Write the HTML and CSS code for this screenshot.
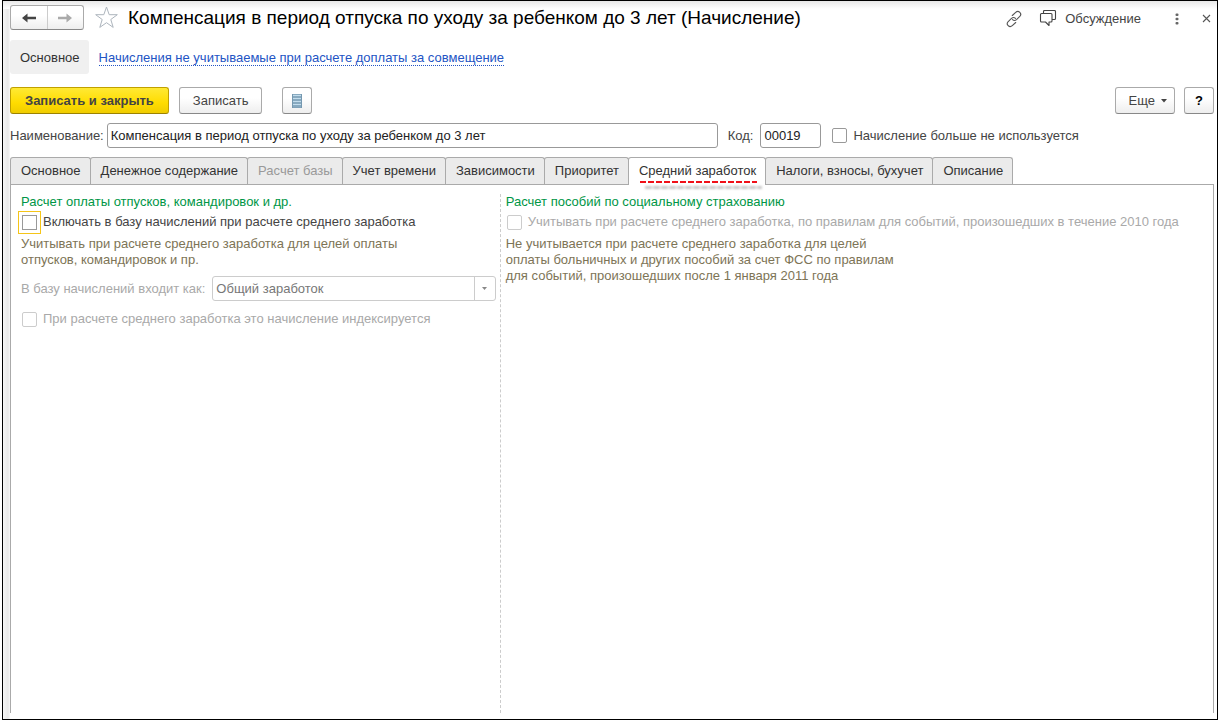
FILE: index.html
```html
<!DOCTYPE html>
<html lang="ru">
<head>
<meta charset="utf-8">
<title>Компенсация в период отпуска по уходу за ребенком до 3 лет (Начисление)</title>
<link rel="stylesheet" href="styles.css">
</head>
<body>
<main class="window">
  <header class="titlebar">
    <div class="history">
      <button class="history-btn" type="button" aria-label="Назад">
        <svg width="16" height="12" viewBox="0 0 16 12"><path d="M1 6L6.500 1.500V4.800H15V7.200H6.500V10.500Z" fill="#444"/></svg>
      </button>
      <button class="history-btn" type="button" aria-label="Вперед">
        <svg width="16" height="12" viewBox="0 0 16 12"><path d="M15 6L9.500 1.500V4.800H1V7.200H9.500V10.500Z" fill="#aaa"/></svg>
      </button>
    </div>
    <button class="icon-btn star" type="button" aria-label="Избранное">
      <svg width="24" height="24" viewBox="0 0 24 24"><path d="M12.500 1L15.200 8.700H23.300L16.800 13.500L19.200 21.400L12.500 16.700L5.800 21.400L8.200 13.500L1.700 8.700H9.800Z" fill="#fff" stroke="#adb5bd"/></svg>
    </button>
    <h1 class="title">Компенсация в период отпуска по уходу за ребенком до 3 лет (Начисление)</h1>
    <div class="title-actions">
      <button class="icon-btn" type="button" aria-label="Ссылка">
        <svg width="18" height="18" viewBox="0 0 18 18" fill="none" stroke="#555" stroke-width="1.100" stroke-linecap="round"><path d="M7.300 5.500L10.700 2.300C12 1.100 13.700 1.200 14.800 2.300C16 3.500 16 5.200 14.800 6.400L11.500 9.600C10.300 10.700 8.700 10.700 7.500 9.600"/><path d="M10.700 12.500L7.300 15.700C6 16.900 4.300 16.800 3.200 15.700C2 14.500 2 12.800 3.200 11.600L6.500 8.400C7.700 7.300 9.300 7.300 10.500 8.400"/></svg>
      </button>
      <button class="icon-btn discuss" type="button">
        <svg width="18" height="18" viewBox="0 0 18 18" fill="none" stroke="#444" stroke-width="1.100" stroke-linejoin="round"><path d="M2.500 3.500H12C12.800 3.500 13 3.800 13 4.500V11C13 11.700 12.700 12 12 12H10V15.500L6.500 12H2.500C1.800 12 1.500 11.700 1.500 11V4.500C1.500 3.800 1.800 3.500 2.500 3.500Z"/><path d="M4.500 3.500V1.500C4.500 .8 4.800 .5 5.500 .5H15.500C16.200 .5 16.500 .8 16.500 1.500V8.500C16.500 9.200 16.200 9.500 15.500 9.500H13"/></svg>
        <span>Обсуждение</span>
      </button>
      <button class="icon-btn dots" type="button" aria-label="Меню">
        <svg width="4" height="12" viewBox="0 0 4 12" fill="#666"><rect x=".5" y=".5" width="3" height="2.600" rx="1"/><rect x=".5" y="4.700" width="3" height="2.600" rx="1"/><rect x=".5" y="8.900" width="3" height="2.600" rx="1"/></svg>
      </button>
      <button class="icon-btn close" type="button" aria-label="Закрыть">
        <svg width="9" height="9" viewBox="0 0 9 9"><path d="M1 1L8 8M8 1L1 8" stroke="#555" stroke-width="1.100"/></svg>
      </button>
    </div>
  </header>

  <nav class="sections">
    <span class="section-current">Основное</span>
    <a class="section-link" href="#supplement">Начисления не учитываемые при расчете доплаты за совмещение</a>
  </nav>

  <div class="toolbar">
    <button class="btn btn-primary" type="button">Записать и закрыть</button>
    <button class="btn btn-save" type="button">Записать</button>
    <button class="btn btn-square btn-list" type="button" aria-label="Список">
      <svg width="10" height="14" viewBox="0 0 10 14"><rect width="10" height="14" fill="#7598b0"/><path d="M1 1.500H9M1 4.500H9M1 7.500H9M1 10.500H9" stroke="#c3dded" stroke-width="1.600"/><path d="M1 12.900H9" stroke="#94b5c9"/></svg>
    </button>
    <button class="btn btn-more" type="button">Еще <svg width="6" height="4" viewBox="0 0 6 4"><path d="M0 0H6L3 3.500Z" fill="#444"/></svg></button>
    <button class="btn btn-square btn-help" type="button">?</button>
  </div>

  <div class="fields">
    <label for="name">Наименование:</label>
    <input class="text-input name-input" id="name" type="text" value="Компенсация в период отпуска по уходу за ребенком до 3 лет">
    <label for="code">Код:</label>
    <input class="text-input code-input" id="code" type="text" value="00019">
    <label class="check"><input class="checkbox" type="checkbox"><span>Начисление больше не используется</span></label>
  </div>

  <div class="tabs" role="tablist">
    <button class="tab" role="tab" type="button">Основное</button>
    <button class="tab" role="tab" type="button">Денежное содержание</button>
    <button class="tab" role="tab" type="button" disabled>Расчет базы</button>
    <button class="tab" role="tab" type="button">Учет времени</button>
    <button class="tab" role="tab" type="button">Зависимости</button>
    <button class="tab" role="tab" type="button">Приоритет</button>
    <button class="tab active" role="tab" type="button" aria-selected="true">Средний заработок<svg class="marker" width="126" height="14" viewBox="0 0 126 14"><path class="marker-shadow" d="M6 8.500H123" stroke="#777" stroke-opacity=".4" stroke-width="3" stroke-dasharray="7 1"/><path d="M1 3H118" stroke="#f01018" stroke-width="2" stroke-dasharray="6 2"/></svg></button>
    <button class="tab" role="tab" type="button">Налоги, взносы, бухучет</button>
    <button class="tab" role="tab" type="button">Описание</button>
  </div>

  <section class="panel" role="tabpanel">
    <div class="column column-left">
      <h2 class="group-title">Расчет оплаты отпусков, командировок и др.</h2>
      <label class="check focused"><input class="checkbox" type="checkbox"><span>Включать в базу начислений при расчете среднего заработка</span></label>
      <p class="hint">Учитывать при расчете среднего заработка для целей оплаты<br>отпусков, командировок и пр.</p>
      <div class="base-row">
        <label for="base">В базу начислений входит как:</label>
        <div class="select-box">
          <select class="select" id="base" disabled><option>Общий заработок</option></select>
          <span class="select-arrow"><svg width="5" height="3" viewBox="0 0 5 3"><path d="M0 0H5L2.500 3Z" fill="#888"/></svg></span>
        </div>
      </div>
      <label class="check disabled"><input class="checkbox" type="checkbox" disabled><span>При расчете среднего заработка это начисление индексируется</span></label>
    </div>
    <div class="column column-right">
      <h2 class="group-title">Расчет пособий по социальному страхованию</h2>
      <label class="check disabled"><input class="checkbox" type="checkbox" disabled><span>Учитывать при расчете среднего заработка, по правилам для событий, произошедших в течение 2010 года</span></label>
      <p class="hint">Не учитывается при расчете среднего заработка для целей<br>оплаты больничных и других пособий за счет ФСС по правилам<br>для событий, произошедших после 1 января 2011 года</p>
    </div>
  </section>
</main>
</body>
</html>
```
FILE: styles.css
```css
* { box-sizing: border-box; }

body {
  margin: 0;
  padding-left: 2px;
  background: #fff;
  color: #444;
  font: 13px/16px "Liberation Sans", Arial, sans-serif;
}

button, input, select { font: inherit; color: inherit; }
button { margin: 0; cursor: pointer; }

.window {
  display: flex;
  flex-direction: column;
  min-height: 100vh;
  padding: 4px 3px 6px 7px;
  border: 1px solid #000;
  background:
    linear-gradient(to bottom, #e8e8e8, #fff 8px) top / 100% 8px no-repeat,
    linear-gradient(to right, #f6f6f6, #e8e8e8 5px, #f8f8f8 7px) left / 7px 100% no-repeat,
    #fff;
}

.titlebar { display: flex; align-items: center; height: 25px; }

.history {
  display: flex;
  width: 74px;
  height: 25px;
  border: 1px solid #aaa;
  border-bottom-color: #888;
  border-radius: 3px;
  background: linear-gradient(#fff 40%, #eee);
}
.history-btn {
  display: flex;
  flex: 1;
  align-items: center;
  justify-content: center;
  padding: 0;
  border: 0;
  background: none;
}
.history-btn + .history-btn { border-left: 1px solid #ccc; }

.icon-btn {
  display: flex;
  align-items: center;
  padding: 0;
  border: 0;
  background: none;
}
.star { margin: 0 10px; }

.title {
  flex: 1;
  margin: 0;
  color: #000;
  font-size: 19px;
  font-weight: 400;
  line-height: 24px;
  white-space: nowrap;
}

.title-actions { display: flex; align-items: center; padding-top: 2px; }
.discuss { gap: 8px; margin-left: 16px; }
.dots { margin-left: 34px; }
.close { margin: 0 3px 0 23px; }

.sections { display: flex; align-items: center; gap: 10px; margin-top: 10px; }
.section-current {
  padding: 10px 9px 8px 10px;
  border-radius: 3px;
  background: #f0f0f0;
  color: #333;
}
.section-link {
  margin-top: 2px;
  border-bottom: 1px dotted #2354c4;
  color: #2354c4;
  line-height: 14px;
  text-decoration: none;
}

.toolbar { display: flex; margin-top: 13px; }
.btn {
  height: 27px;
  padding: 0 13px;
  border: 1px solid #aaa;
  border-bottom-color: #888;
  border-radius: 3px;
  background: linear-gradient(#fff 40%, #eee);
}
.btn-primary {
  padding: 0 14px;
  border-color: #c0a000;
  border-bottom-color: #9c8200;
  background: linear-gradient(#ffe934, #ffdc00 60%, #f0cc00);
  font-weight: 700;
}
.btn-save { margin-left: 10px; }
.btn-square { display: flex; align-items: center; justify-content: center; width: 30px; padding: 0; }
.btn-list { margin-left: 20px; }
.btn-more { display: flex; align-items: center; gap: 6px; margin-left: auto; padding: 0 7px 0 13px; }
.btn-help { margin-left: 9px; color: #000; font-weight: 700; }

.fields { display: flex; align-items: center; margin-top: 9px; }
.text-input {
  height: 25px;
  padding: 0 3px;
  border: 1px solid #999;
  border-radius: 3px;
  background: #fff;
  color: #222;
}
.name-input { flex: 0 1 611px; margin: 0 10px 0 3px; }
.code-input { width: 61px; margin: 0 11px 0 7px; }

.check { display: flex; align-items: center; gap: 6px; }
.checkbox {
  flex: none;
  width: 15px;
  height: 15px;
  margin: 0;
  border: 1px solid #999;
  border-radius: 2px;
  background: #fff;
  appearance: none;
}
.disabled { color: #a9a9a9; }
.disabled .checkbox { border-color: #ccc; }
.focused .checkbox { border-radius: 0; outline: 1px solid #f5c518; outline-offset: 3px; }

.tabs { display: flex; margin-top: 9px; }
.tab {
  position: relative;
  height: 27px;
  margin-right: -1px;
  padding: 0 9px 0 10px;
  border: 1px solid #aaa;
  border-bottom: 0;
  border-radius: 3px 3px 0 0;
  background: #ebebeb;
  color: #333;
  white-space: nowrap;
}
.tab:disabled { color: #999; }
.active { z-index: 1; height: 28px; margin-bottom: -1px; padding-bottom: 1px; background: #fff; }
.marker { position: absolute; top: 21px; left: 10px; }
.marker-shadow { filter: blur(1px); }

.panel {
  display: grid;
  flex: 1;
  grid-template-columns: 11fr 16fr;
  padding-top: 9px;
  border: 1px solid #aaa;
  border-bottom: 0;
}
.column-left { padding-right: 4px; padding-left: 10px; border-right: 1px dashed #ccc; }
.column-right { padding-left: 5px; }
.column .check { padding-left: 1px; line-height: 18px; }

.group-title { margin: 0 0 3px; color: #009646; font-size: 13px; font-weight: 400; }
.hint { margin: 5px 0 0; color: #7d7456; }

.base-row { display: flex; align-items: center; gap: 7px; margin: 8px 0 9px; color: #a9a9a9; }
.select-box {
  display: flex;
  flex: 1;
  height: 25px;
  border: 1px solid #ccc;
  border-radius: 3px;
}
.select {
  flex: 1;
  min-width: 0;
  padding: 0 3px;
  border: 0;
  background: none;
  color: #777;
  opacity: 1;
  appearance: none;
}
.select-arrow {
  display: flex;
  align-items: center;
  justify-content: center;
  width: 21px;
  border-left: 1px solid #ccc;
}
```
